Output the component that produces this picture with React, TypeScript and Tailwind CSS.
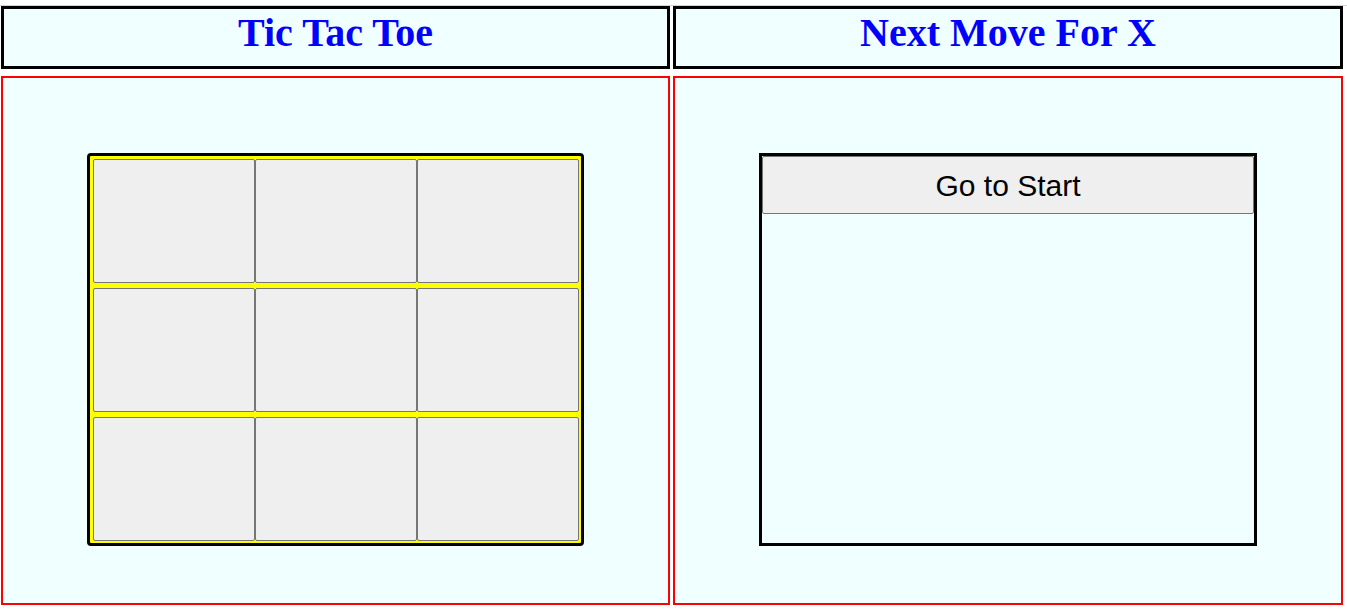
const cells = [0, 1, 2];

const App = () => {
  return (
    <div className="min-h-screen bg-white pt-[5px] font-['Liberation_Serif',serif]">
      <div className="border-t border-[#d3d3d3]">
        <div className="grid grid-cols-[669px_670px] gap-x-[3px] gap-y-[7px] pl-[1px]">
          <div className="h-[63px] border-[3px] border-black bg-[#f0ffff] pt-[5px] text-center">
            <h1 className="text-[40px] leading-[38px] font-bold text-[#0000ff]">Tic Tac Toe</h1>
          </div>
          <div className="h-[63px] border-[3px] border-black bg-[#f0ffff] pt-[5px] text-center">
            <h1 className="text-[40px] leading-[38px] font-bold text-[#0000ff]">Next Move For X</h1>
          </div>

          <div className="flex h-[529px] justify-center border-2 border-[#ff0000] bg-[#f0ffff] pt-[75px]">
            <div className="flex h-[393px] w-[497px] flex-col gap-[5px] rounded-[4px] border-[3px] border-black bg-[#ffff00] pt-[3px] pb-[2px] pl-[3px] pr-[2px]">
              {cells.map((r) => (
                <div key={r} className="flex h-[124px]">
                  {cells.map((c) => (
                    <button
                      key={c}
                      className="h-full w-[162px] rounded-[2px] border border-[#767676] bg-[#efefef]"
                    />
                  ))}
                </div>
              ))}
            </div>
          </div>

          <div className="flex h-[529px] justify-center border-2 border-[#ff0000] bg-[#f0ffff] pt-[75px]">
            <div className="h-[393px] w-[498px] border-[3px] border-black">
              <button className="h-[58px] w-full rounded-[2px] border border-[#767676] bg-[#efefef] font-['Liberation_Sans',sans-serif] text-[30px] text-black">
                Go to Start
              </button>
            </div>
          </div>
        </div>
      </div>
    </div>
  );
};

export default App;
